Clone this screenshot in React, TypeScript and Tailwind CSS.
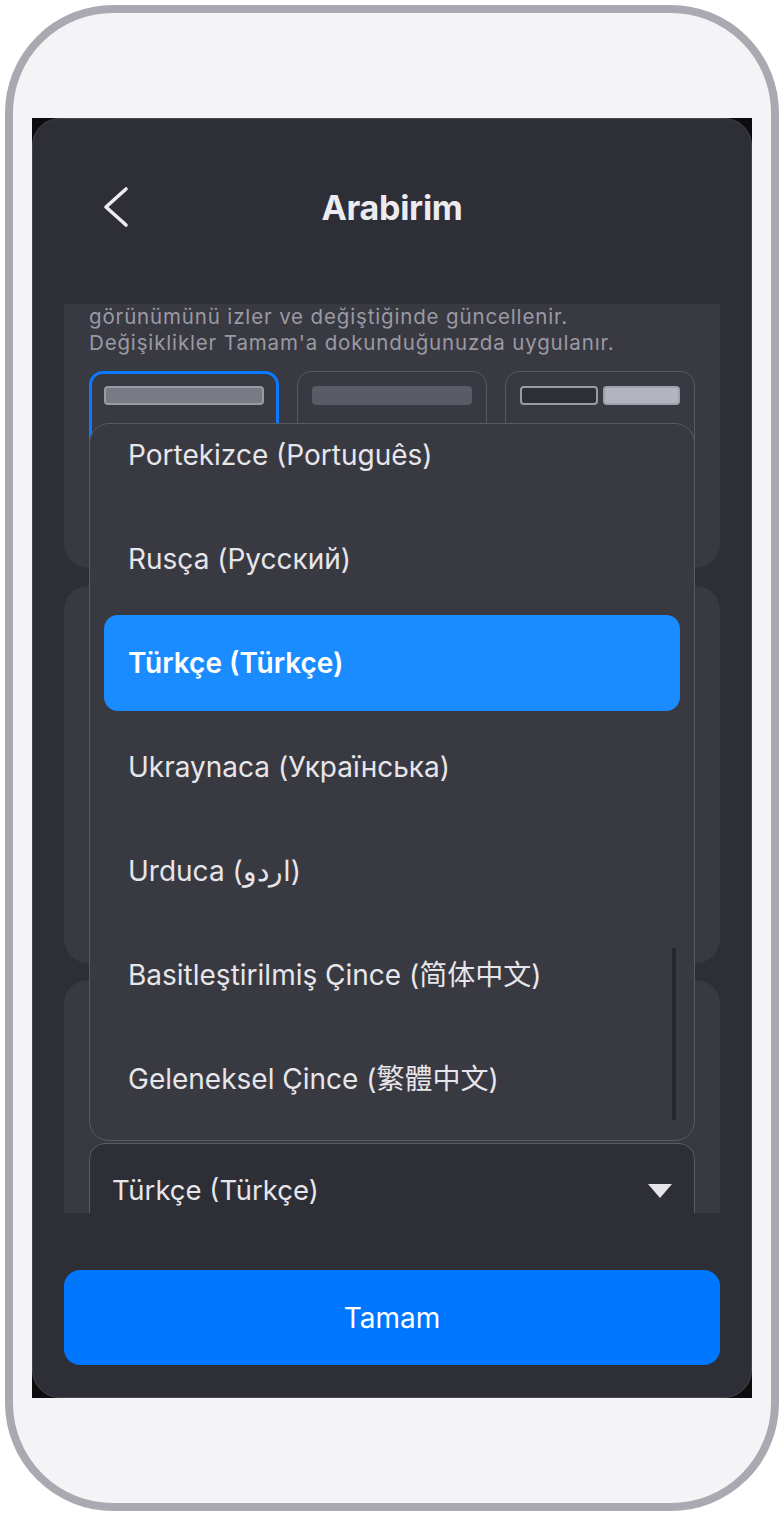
const font = { fontFamily: 'Inter, "Noto Sans CJK SC", "Noto Sans CJK TC", sans-serif' };

const languages = [
  "Portekizce (Português)",
  "Rusça (Русский)",
  "Türkçe (Türkçe)",
  "Ukraynaca (Українська)",
  "Urduca (اردو)",
  "Basitleştirilmiş Çince (简体中文)",
  "Geleneksel Çince (繁體中文)",
];

const selected = "Türkçe (Türkçe)";

function ThemeTile({ active, children }: { active?: boolean; children: React.ReactNode }) {
  return (
    <div
      className={
        active
          ? "h-[173px] rounded-[14px] border-[3px] border-[#0a7aff] px-[12px] pt-[12px]"
          : "h-[173px] rounded-[14px] border border-[#5a5a66] px-[14px] pt-[14px]"
      }
    >
      {children}
    </div>
  );
}

export default function App() {
  return (
    <div className="w-[784px] h-[1516px] bg-white p-[5px]" style={font}>
      <div className="w-[774px] h-[1506px] rounded-[108px] border-[8px] border-[#a9aab1] bg-[#f4f4f6] pl-[19px] pt-[105px]">
        <div className="w-[720px] h-[1280px] bg-[#0d0d10]">
          <div className="flex h-full flex-col rounded-[28px] border border-[#46464f] bg-[#2e2e36]">
            {/* header */}
            <div className="relative flex h-[185px] shrink-0 items-center justify-center pb-[8px]">
              <svg
                className="absolute left-[69px] top-[67px]"
                width="28"
                height="42"
                viewBox="0 0 28 42"
                fill="none"
                stroke="#ececf0"
                strokeWidth="3.6"
                strokeLinecap="round"
                strokeLinejoin="round"
              >
                <path d="M24 3 4 21l20 18" />
              </svg>
              <h1 className="text-[34px] font-bold tracking-[-0.3px] text-[#ececf0]">Arabirim</h1>
            </div>

            {/* scroll area */}
            <div className="relative mx-[31px] h-[909px] shrink-0 overflow-hidden">
              <div className="-mt-[60px] flex flex-col">
                <section className="rounded-[24px] bg-[#393942] px-[25px] pt-[60px] pb-6">
                  <div className="text-[20.5px] leading-[26px] tracking-[0.85px] text-[#9a9aa4]">
                    <span className="block">görünümünü izler ve değiştiğinde güncellenir.</span>
                    <span className="block">Değişiklikler Tamam'a dokunduğunuzda uygulanır.</span>
                  </div>
                  <div className="mt-[15px] grid grid-cols-3 gap-[18px]">
                    <ThemeTile active>
                      <div className="h-[19px] rounded-[4px] border-2 border-[#9a9aa4] bg-[#7a7a85]" />
                    </ThemeTile>
                    <ThemeTile>
                      <div className="h-[19px] rounded-[4px] bg-[#5b5b67]" />
                    </ThemeTile>
                    <ThemeTile>
                      <div className="flex h-[19px] gap-[5px]">
                        <div className="flex-1 rounded-[4px] border-2 border-[#9a9aa4] bg-[#2e2e36]" />
                        <div className="flex-1 rounded-[4px] border-2 border-[#9fa2ad] bg-[#b2b5bf]" />
                      </div>
                    </ThemeTile>
                  </div>
                </section>

                <section className="mt-[18px] h-[377px] rounded-[24px] bg-[#393942]" />

                <section className="mt-[17px] rounded-[24px] bg-[#393942] px-[25px] pt-[163px] pb-6">
                  <div className="flex h-[96px] items-center justify-between rounded-[16px] border border-[#5a5a66] bg-[#2e2e36] pl-[22px] pr-[22px]">
                    <span className="text-[27.5px] text-[#e6e6ea]">Türkçe (Türkçe)</span>
                    <svg width="24" height="14" viewBox="0 0 24 14">
                      <path d="M0 0h24L12 14z" fill="#e6e6ea" />
                    </svg>
                  </div>
                </section>
              </div>

              {/* open dropdown */}
              <div className="absolute left-[25px] top-[119px] h-[718px] w-[606px] overflow-hidden rounded-[20px] border border-[#5a5a66] bg-[#393942]">
                <div className="-mt-[17px] flex flex-col gap-2 px-[14px]">
                  {languages.map((l) => (
                    <div
                      key={l}
                      className={
                        l === selected
                          ? "flex h-[96px] shrink-0 items-center rounded-[14px] bg-[#1a8cff] pl-[24px] text-[28px] font-semibold text-white"
                          : "flex h-[96px] shrink-0 items-center pl-[24px] text-[28px] text-[#e6e6ea]"
                      }
                    >
                      {l}
                    </div>
                  ))}
                </div>
                <div className="absolute left-[582px] top-[524px] h-[172px] w-[4px] rounded-full bg-[#26262d]" />
              </div>
            </div>

            {/* footer */}
            <div className="mx-[31px] mt-[57px]">
              <button className="flex h-[95px] w-full items-center justify-center rounded-[16px] bg-[#0077ff] text-[28px] text-white">
                Tamam
              </button>
            </div>
          </div>
        </div>
      </div>
    </div>
  );
}
